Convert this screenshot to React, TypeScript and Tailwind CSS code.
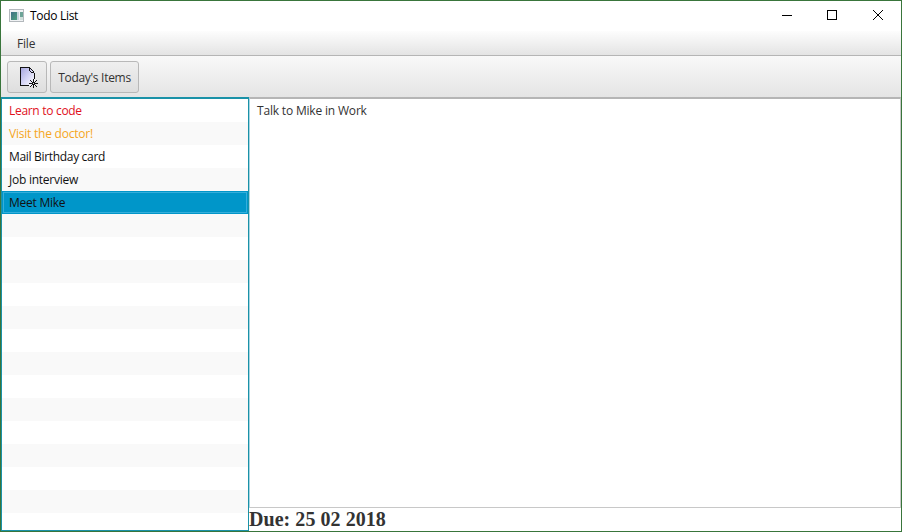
import React from "react";

const items = [
  { text: "Learn to code", tone: "text-[#e0101c]", spacing: "tracking-[-0.3px]" },
  { text: "Visit the doctor!", tone: "text-[#f5a623]", spacing: "tracking-[-0.22px]" },
  { text: "Mail Birthday card", tone: "text-[#111]", spacing: "tracking-[-0.32px]" },
  { text: "Job interview", tone: "text-[#111]", spacing: "tracking-[-0.25px]" },
];

function AppIcon() {
  return (
    <svg width="16" height="14" viewBox="0 0 16 14" shapeRendering="crispEdges">
      <defs>
        <linearGradient id="pane" x1="0" y1="0" x2="1" y2="1">
          <stop offset="0" stopColor="#3f6f86" />
          <stop offset="1" stopColor="#4da07c" />
        </linearGradient>
      </defs>
      <rect x="0.5" y="0.5" width="14" height="12" fill="#f0f2f4" stroke="#b3b8bc" />
      <rect x="2" y="3" width="6" height="8" fill="url(#pane)" />
      <rect x="8" y="3" width="2" height="8" fill="#c5d4dc" />
      <rect x="11" y="3" width="3" height="5" fill="#6ca396" />
      <rect x="11" y="8" width="3" height="3" fill="#cfdfda" />
    </svg>
  );
}

function NewItemIcon() {
  return (
    <svg width="24" height="24" viewBox="0 0 24 24" shapeRendering="crispEdges">
      <defs>
        <linearGradient id="page" x1="0" y1="0" x2="1" y2="1">
          <stop offset="0" stopColor="#a4a4dc" />
          <stop offset="0.5" stopColor="#d4d4f4" />
          <stop offset="1" stopColor="#ffffff" />
        </linearGradient>
      </defs>
      <path d="M5.5 2.5H14.5L19.5 7.5V20.5H5.5Z" fill="url(#page)" />
      <path d="M5 2h10v1h-9v17h8v1h-9zM15 3h1v1h-1zM16 4h1v1h-1zM17 5h1v1h-1zM18 6h1v2h-1zM19 8h1v6h-1zM14 3h1v3h-1zM15 6h1v1h-1zM16 7h3v1h-3z" fill="#111" />
      <path d="M18 14h1v9h-1zM14 18h9v1h-9zM15 15h1v1h-1zM16 16h1v1h-1zM20 16h1v1h-1zM21 15h1v1h-1zM16 20h1v1h-1zM15 21h1v1h-1zM20 20h1v1h-1zM21 21h1v1h-1z" fill="#111" />
      <path d="M17 17h1v1h-1zM19 17h1v1h-1zM17 19h1v1h-1zM19 19h1v1h-1z" fill="#111" />
      <rect x="18" y="18" width="1" height="1" fill="#fff" />
    </svg>
  );
}

export default function App() {
  return (
    <div className="flex h-[532px] w-[902px] flex-col overflow-hidden border border-[#39753b] bg-white font-['Open_Sans','Noto_Sans',sans-serif] text-[12px] text-[#333]">
      <header className="flex h-[30px] shrink-0 items-center pl-2 text-black">
        <AppIcon />
        <span className="ml-[5px] grow whitespace-nowrap tracking-[-0.3px]">Todo List</span>
        <svg width="112" height="12" viewBox="0 0 112 12" className="mb-[2px] mr-[8px]" fill="none" stroke="#000">
          <path d="M1 6.5H11M46.5 1.5H55.5V10.5H46.5Z" shapeRendering="crispEdges" />
          <path d="M92 1L102 11M102 1L92 11" />
        </svg>
      </header>
      <nav className="flex h-[25px] shrink-0 items-center border-b border-[#b5b5b5] bg-linear-to-b from-[#fdfdfd] to-[#e4e4e4] pl-4 pt-[2px]">
        <span className="tracking-[-0.2px]">File</span>
      </nav>
      <div className="flex h-[41px] shrink-0 items-center gap-[3px] bg-linear-to-b from-[#f9f9f9] to-[#e4e4e4] pl-[6px]">
        <button className="flex h-8 w-10 items-center justify-center rounded-[3px] border border-[#b8b8b8] bg-linear-to-b from-[#efefef] to-[#dedede]">
          <NewItemIcon />
        </button>
        <button className="h-8 w-[89px] whitespace-nowrap rounded-[3px] border border-[#b8b8b8] bg-linear-to-b from-[#efefef] to-[#dedede] pt-[2px] tracking-[-0.3px]">
          Today's Items
        </button>
      </div>
      <main className="flex min-h-0 grow">
        <ul className="w-[248px] shrink-0 overflow-hidden border border-t-2 border-[#1a92a8]">
          {items.map((item, i) => (
            <li key={item.text} className={`flex h-[23px] items-center whitespace-nowrap pl-[7px] pt-px ${item.tone} ${item.spacing} ${i % 2 ? "bg-[#f9f9f9]" : "bg-white"}`}>
              {item.text}
            </li>
          ))}
          <li className="h-[23px] bg-[#0096c9] p-px">
            <div className="flex h-full items-center border border-[#35aedb] pl-[5px] pt-px tracking-[-0.25px] text-[#111]">Meet Mike</div>
          </li>
          {Array.from({ length: 14 }, (_, i) => (
            <li key={i} className={`h-[23px] ${i % 2 ? "bg-white" : "bg-[#f9f9f9]"}`} />
          ))}
        </ul>
        <section className="flex grow flex-col">
          <div className="grow border-x border-b border-t-2 border-b-[#c8c8c8] border-l-[#a9d5e2] border-r-[#c8c8c8] border-t-[#b5b5b5] pl-[7px] pt-[3px] leading-[18px] tracking-[-0.18px]">
            Talk to Mike in Work
          </div>
          <div className="h-[23px] shrink-0 whitespace-nowrap font-['Liberation_Serif',serif] text-[20px] font-bold leading-[23px] tracking-[0.05px]">
            Due: 25 02 2018
          </div>
        </section>
      </main>
    </div>
  );
}
